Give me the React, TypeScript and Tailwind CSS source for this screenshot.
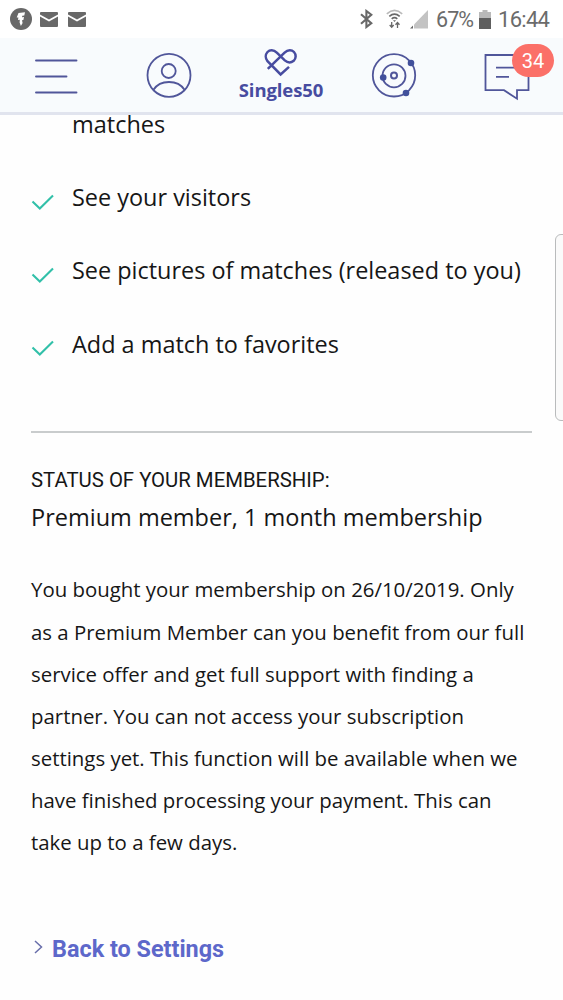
const benefits = [
  "See your visitors",
  "See pictures of matches (released to you)",
  "Add a match to favorites",
];

const statusLines = [
  "You bought your membership on 26/10/2019. Only",
  "as a Premium Member can you benefit from our full",
  "service offer and get full support with finding a",
  "partner. You can not access your subscription",
  "settings yet. This function will be available when we",
  "have finished processing your payment. This can",
  "take up to a few days.",
];

const MailIcon = () => (
  <svg width="18" height="15" viewBox="0 0 18 15" fill="#686868">
    <path d="M1 0H17Q18 0 18 1V2.5L9 7.5L0 2.5V1Q0 0 1 0Z" />
    <path d="M0 4.5L9 9.5L18 4.5V14Q18 15 17 15H1Q0 15 0 14Z" />
  </svg>
);

const StatusBar = () => (
  <div className="flex h-[38px] shrink-0 items-center bg-white pl-[10px] pr-[13px]">
    <svg width="22" height="22" viewBox="0 0 22 22">
      <circle cx="11" cy="11" r="11" fill="#686868" />
      <path
        d="M8.5 5L15 4.3L14.3 7.5L12.3 7.7L12 9.2L14 9L13.4 12L12 12.2L12.6 15L10.9 18L9.6 14.5L9.8 11.8L8 12L8.4 9.6L6.7 9.6Z"
        fill="#fff"
      />
    </svg>
    <div className="ml-2 flex gap-[10px]">
      <MailIcon />
      <MailIcon />
    </div>
    <div className="ml-auto flex items-center text-[#6b6b6b]">
      <svg width="13" height="20" viewBox="0 0 13 20" fill="none" stroke="#686868" strokeWidth="2.1">
        <path d="M1 5.3L11.3 14.2L6.4 18V2L11.3 5.7L1 14.7" />
      </svg>
      <svg className="ml-[13px]" width="17" height="20" viewBox="0 0 17 20" fill="none" stroke="#686868" strokeWidth="1.6">
        <path d="M.8 4.8Q8.5-2 16.2 4.8" stroke="#b9b9b9" />
        <path d="M3.3 7.3Q8.5 2.8 13.7 7.3M5.7 9.8Q8.5 7.4 11.3 9.8" />
        <path d="M7 11.2H10L8.5 13Z" fill="#686868" stroke="none" />
        <path d="M5.7 13V18M3.7 16L5.7 18.3L7.7 16M11.5 19V13.8M9.5 15.8L11.5 13.5L13.5 15.8" strokeWidth="1.3" />
      </svg>
      <svg className="ml-[7px]" width="18" height="19" viewBox="0 0 18 19">
        <path d="M18 0V18.5H4V14.5Z" fill="#c3c3c3" />
        <path d="M0 18.5L3 15.5V18.5Z" fill="#686868" />
      </svg>
      <span className="ml-[8px] w-[38px] whitespace-nowrap pt-0.5 font-[Roboto] text-[21.5px] leading-none tracking-[-0.9px]">67%</span>
      <svg className="ml-[5px]" width="12" height="19" viewBox="0 0 12 19">
        <path d="M3.5 0H8.5V2H12V8H0V2H3.5Z" fill="#b9b9b9" />
        <path d="M0 8H12V19H0Z" fill="#5f5f5f" />
      </svg>
      <span className="ml-[7px] w-[52px] whitespace-nowrap pt-0.5 font-[Roboto] text-[22px] leading-none tracking-[-0.7px]">16:44</span>
    </div>
  </div>
);

const NavBar = () => (
  <header className="flex h-[77px] shrink-0 items-start border-b-[3px] border-[#e1e4ee] bg-[#f8fbfd] pl-[35px]">
    <svg className="mt-[20px]" width="43" height="36" viewBox="0 0 43 36" stroke="#50569a" strokeWidth="1.9" strokeLinecap="round">
      <path d="M1 2.5H41.5M1 18.5H31.5M1 34.5H41.5" />
    </svg>
    <svg className="ml-[68px] mt-[14px]" width="46" height="46" viewBox="0 0 46 46" fill="none" stroke="#50569a" strokeWidth="1.8">
      <circle cx="23" cy="23.3" r="21.5" />
      <circle cx="22.7" cy="19" r="7" />
      <path d="M7.5 37.8Q12.5 30 23 30T38.5 37.8" />
    </svg>
    <div className="ml-[45px] mt-[10px] flex w-[88px] flex-col items-center">
      <svg width="34" height="29" viewBox="0 0 34 29" fill="none" stroke="#474ca0" strokeWidth="2.5">
        <path d="M3.8 20.9L20.6 4.6C24 1.3 27.8 1.7 30 4C32.4 6.6 32.1 10.6 29.7 12.8C27 15 23.5 14.8 20.8 12.4L12.8 4.6C9.5 1.3 5.7 1.7 3.5 4C1.1 6.6 1.3 10.4 3.5 13.2L16.6 26.5L25 18.8" />
      </svg>
      <span className="mt-[3px] whitespace-nowrap font-['Open_Sans'] text-[18.5px] font-bold leading-[20px] tracking-[-0.1px] text-[#474ca0]">Singles50</span>
    </div>
    <svg className="ml-[46px] mt-[14px]" width="46" height="46" viewBox="0 0 46 46" fill="none" stroke="#50569a" strokeWidth="1.8">
      <circle cx="23" cy="23.3" r="21.2" />
      <circle cx="23" cy="23.8" r="11.5" />
      <circle cx="23" cy="23.5" r="3" strokeWidth="2" />
      <g fill="#41509b" stroke="none">
        <circle cx="40" cy="11" r="3.3" />
        <circle cx="12.2" cy="25.5" r="3.3" />
        <circle cx="35" cy="41" r="3.3" />
      </g>
    </svg>
    <div className="relative ml-[67px] mt-[15px]">
      <svg width="46" height="48" viewBox="0 0 46 48" fill="none" stroke="#50569a" strokeWidth="1.8">
        <path d="M1.5 2H44.5V37.2H33V45.7L20 37.2H1.5ZM12 14.7H34M12 23.9H25" />
      </svg>
      <span className="absolute left-[28px] top-[-9px] flex h-[33px] w-[42px] items-center justify-center rounded-full bg-[#fb7068] font-[Roboto] text-[20px] text-white">34</span>
    </div>
  </header>
);

export default function App() {
  return (
    <div className="relative flex h-[1000px] w-[563px] flex-col overflow-hidden bg-[#fefefe] text-[#161616]">
      <StatusBar />
      <NavBar />
      <main className="flex-1 px-[31px] font-['Open_Sans',sans-serif]">
        <div className="pl-[41px] text-[23.5px] leading-[18px]">matches</div>
        <ul className="mt-[47px] flex flex-col gap-[39.4px]">
          {benefits.map((benefit) => (
            <li key={benefit} className="flex h-[34px] items-center whitespace-nowrap text-[23.45px] leading-[34px]">
              <svg className="mr-[18px] mt-[9px] shrink-0" width="23" height="16" viewBox="0 0 23 16" fill="none" stroke="#32c0a9" strokeWidth="2.1">
                <path d="M1.5 7.5L8.8 14.5L22 1.5" />
              </svg>
              {benefit}
            </li>
          ))}
        </ul>
        <hr className="mt-[70.2px] border-t-2 border-[#c9cccd]" />
        <h2 className="mt-[33px] whitespace-nowrap font-[Roboto] text-[20.35px] leading-[28px]">STATUS OF YOUR MEMBERSHIP:</h2>
        <p className="mt-[5px] whitespace-nowrap text-[23.5px] leading-[36px]">Premium member, 1 month membership</p>
        <div className="mt-[33.5px] whitespace-nowrap text-[20.4px] leading-[42.15px]">
          {statusLines.map((line) => (
            <p key={line}>{line}</p>
          ))}
        </div>
        <a className="mt-[70.5px] flex items-center whitespace-nowrap font-[Roboto] text-[23.4px] font-bold leading-[30px] text-[#5d68ca]">
          <svg className="-mt-[4px] ml-[3px] mr-[9px]" width="9" height="14" viewBox="0 0 9 14" fill="none" stroke="#686eaa" strokeWidth="1.5">
            <path d="M1 1L7.5 7L1 13" />
          </svg>
          Back to Settings
        </a>
      </main>
      <div className="absolute right-[-8px] top-[234px] h-[187px] w-4 rounded-[6px] border border-[#b9bbbc] bg-[#fafafa]" />
    </div>
  );
}
